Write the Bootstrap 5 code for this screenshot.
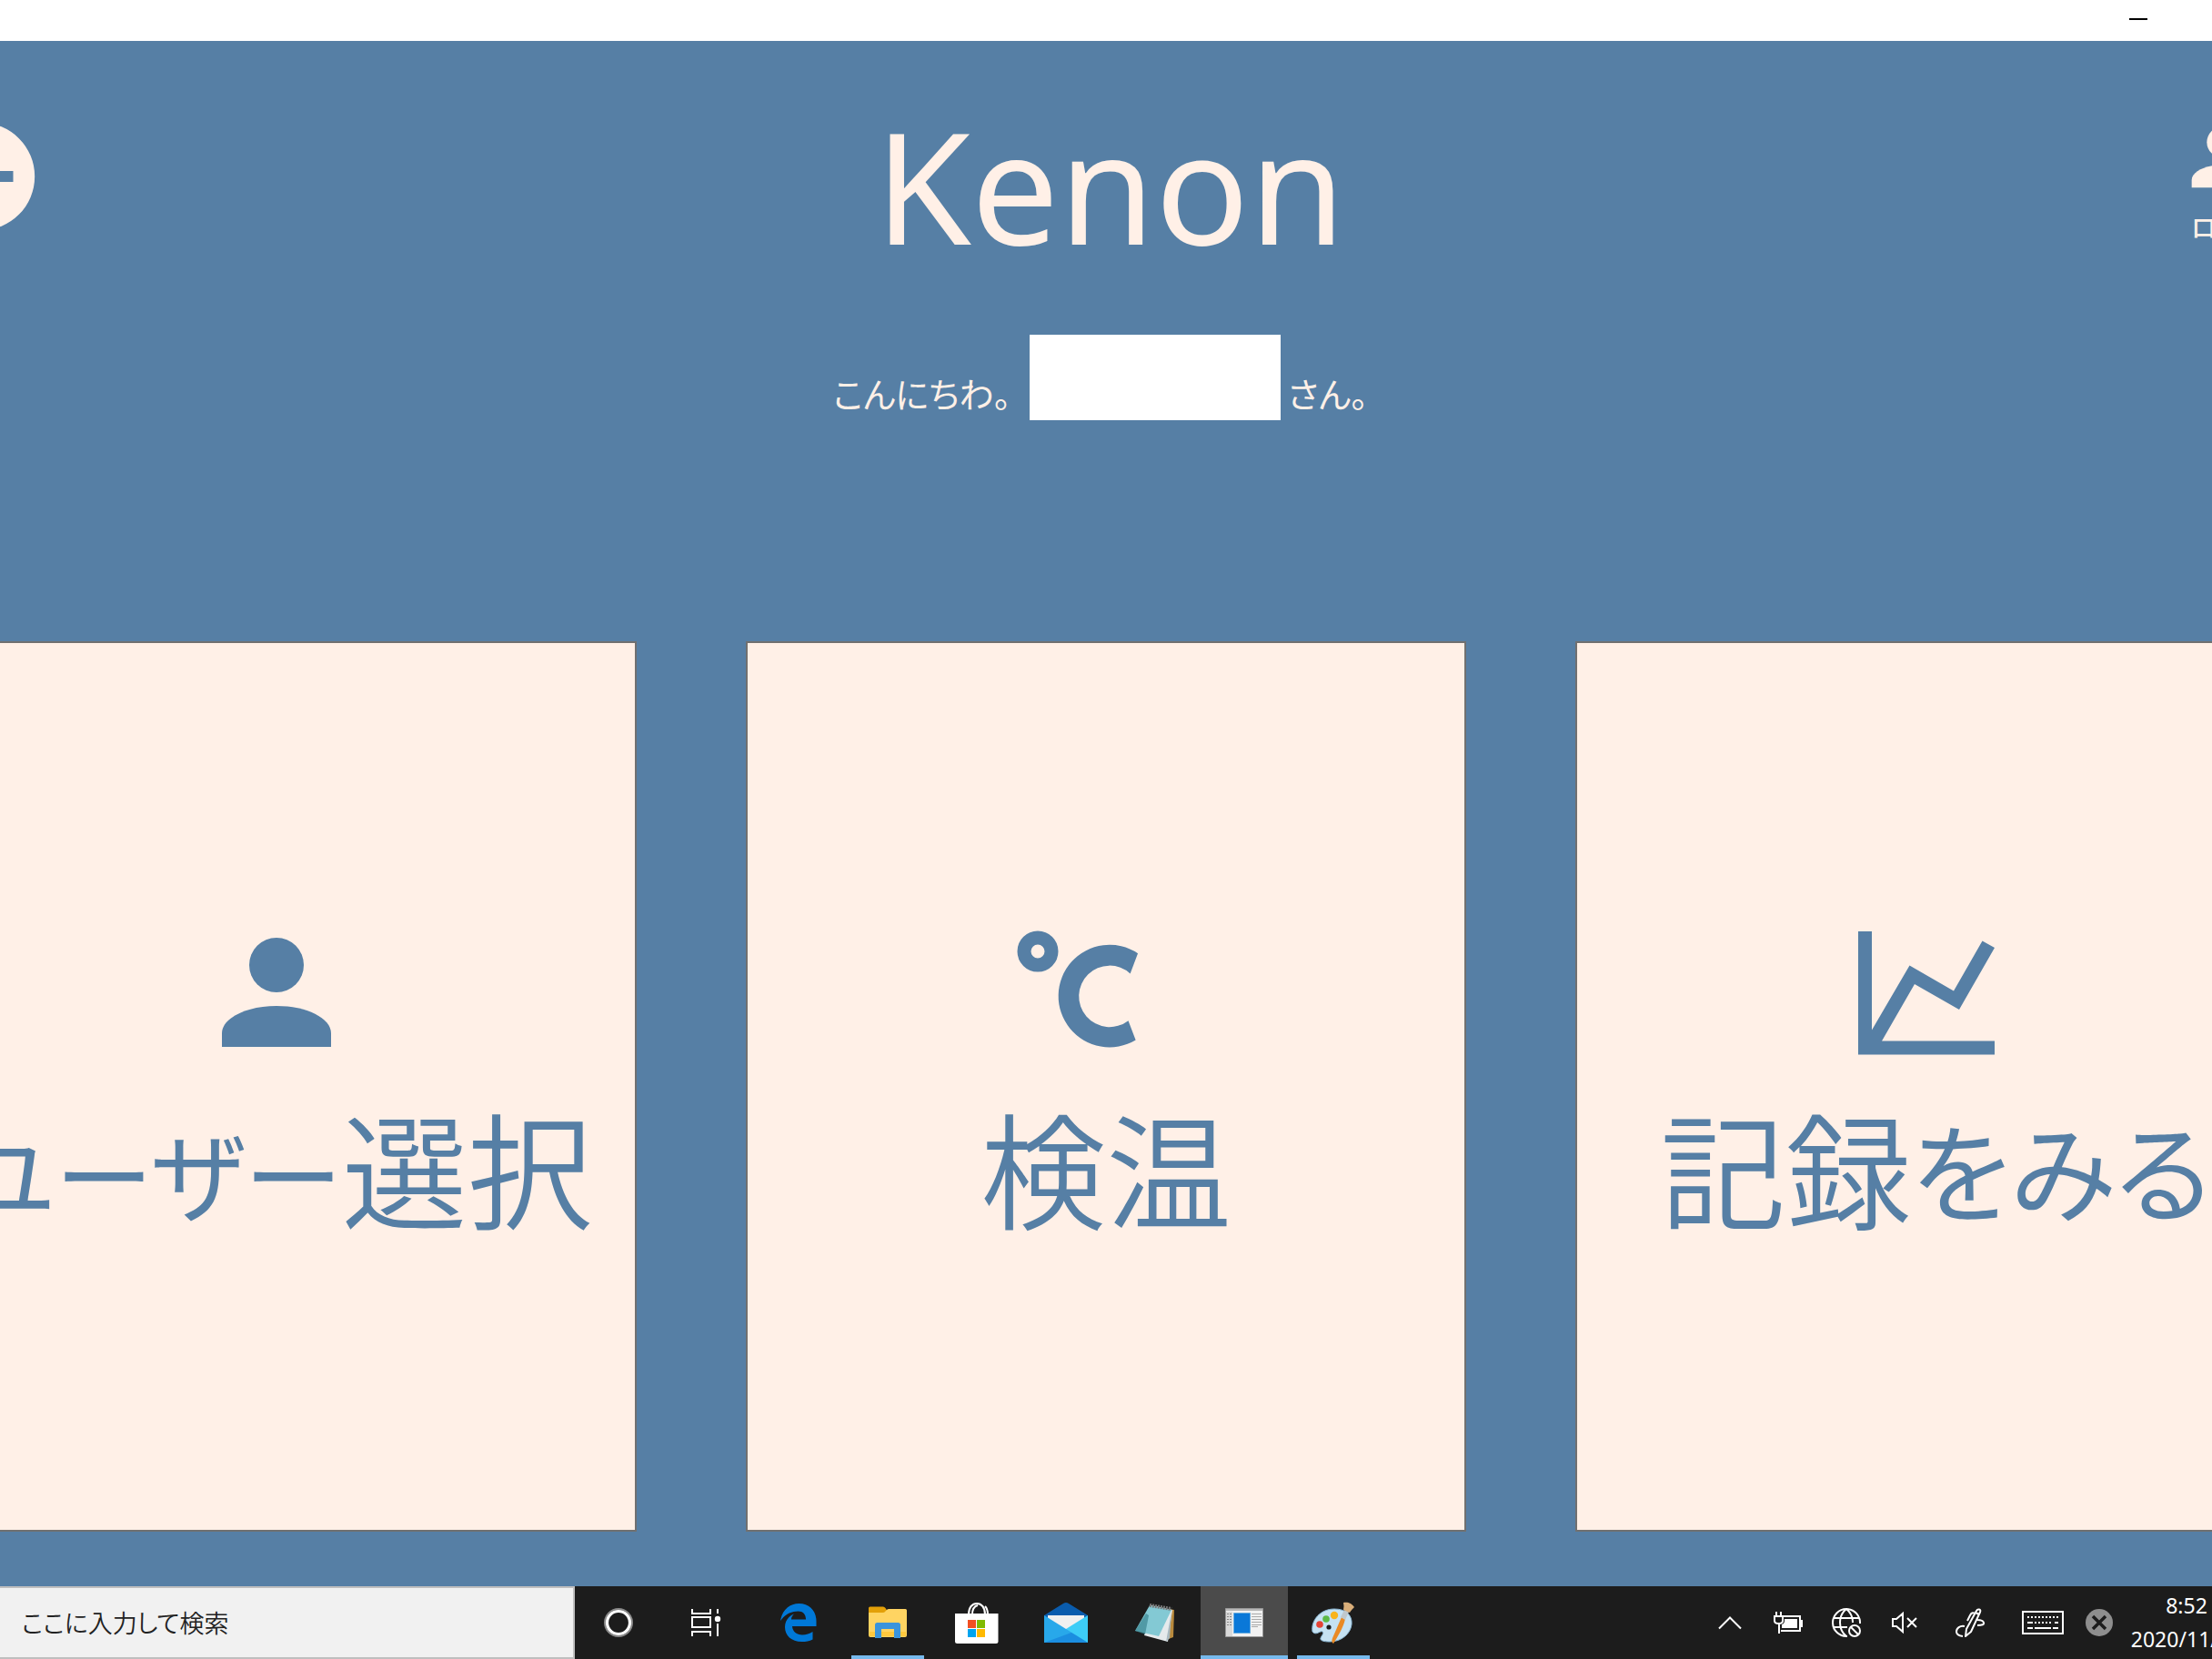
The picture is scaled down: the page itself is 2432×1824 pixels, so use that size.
<!DOCTYPE html>
<html lang="ja">
<head>
<meta charset="utf-8">
<meta name="viewport" content="width=device-width, initial-scale=1">
<title>Kenon</title>
<link rel="stylesheet" href="https://cdn.jsdelivr.net/npm/bootstrap@5.3.0/dist/css/bootstrap.min.css">
<script src="https://cdn.jsdelivr.net/npm/bootstrap@5.3.0/dist/js/bootstrap.bundle.min.js"></script>
<style>
  :root { --kenon-blue: #567fa5; --kenon-cream: #fff0e7; }
  body { font-family: "Noto Sans", "Noto Sans CJK JP", sans-serif; background: var(--kenon-blue); overflow: hidden; }
  button { border: 0; background: none; padding: 0; color: inherit; }
  svg { display: block; overflow: visible; flex: none; }
  .title-strip { height: 45px; background: #fff; padding-right: 71px; }
  .stage { width: 107.6%; margin-left: -3.8%; color: var(--kenon-cream); }
  .top-row { padding-top: 58px; }
  .side { width: 140px; padding-top: 20px; }
  .side-end { width: 131px; padding-top: 20px; }
  .side-label { font: 500 28px/36px "Noto Sans CJK JP", sans-serif; font-feature-settings: "palt"; padding-left: 16px; margin-top: 8px; white-space: nowrap; }
  .app-name { font-size: 171px; line-height: 200px; font-weight: 400; }
  .greeting { margin-top: 65px; margin-bottom: 243px; padding-right: 12px; font: 400 38px/60px "Noto Sans CJK JP", sans-serif; font-feature-settings: "palt"; }
  .user-name { width: 276px; height: 94px; background: #fff; margin: 0 8px 0 20px; }
  .tiles { gap: 120px; margin-bottom: 60px; }
  .tile { flex: 1 1 0; min-width: 0; background: var(--kenon-cream); border: 2px solid #707070; color: var(--kenon-blue); }
  .tile-text { font: 350 138px/200px "Noto Sans CJK JP", sans-serif; font-feature-settings: "palt"; white-space: nowrap; padding-bottom: 8px; }
  .kana { font-size: 118px; font-weight: 400; line-height: 1; vertical-align: 6px; }
  .kana-long { font-size: 108px; }
  .taskbar { height: 80px; background: #1c1c1c; color: #fff; }
  .search { width: 632px; border: 2px solid #bfbfbf; border-left: 0; background: #f1f1f1; padding: 0 24px; font: 350 27px/40px "Noto Sans CJK JP", sans-serif; font-feature-settings: "palt"; }
  .search::placeholder { color: #222; opacity: 1; }
  .task { width: 96px; display: flex; align-items: center; justify-content: center; }
  .pinned { gap: 2px; margin-left: 6px; }
  .running { background: linear-gradient(#76b9ed, #76b9ed) bottom / 80px 4px no-repeat; }
  .active-task { background: linear-gradient(#76b9ed, #76b9ed) bottom / 100% 4px no-repeat #4b4b4b; }
  .tray { width: 64px; display: flex; align-items: center; justify-content: center; }
  .tray-wide { width: 80px; }
  .tray-slim { width: 44px; }
  .clock { width: 102px; overflow: hidden; }
  .clock-text { width: 148px; font-size: 23px; line-height: 37px; text-align: center; white-space: nowrap; }
</style>
</head>
<body>
<div class="min-vh-100 d-flex flex-column">
  <header class="title-strip d-flex justify-content-end">
    <button aria-label="最小化"><svg width="20" height="45" viewBox="0 0 20 45"><path d="M0 20h20v2H0z" fill="#000"/></svg></button>
  </header>

  <main class="stage flex-grow-1 d-flex flex-column">
    <div class="top-row d-flex justify-content-between align-items-start">
      <button class="side" aria-label="戻る">
        <svg width="142" height="142" viewBox="0 0 24 24" fill="currentColor"><path fill-rule="evenodd" d="M12 2a10 10 0 1 0 0 20a10 10 0 0 0 0-20zM18 13H10l3.5 3.5L12 18l-6-6l6-6l1.500 1.500L10 11h8z"/></svg>
      </button>
      <h1 class="app-name m-0">Kenon</h1>
      <button class="side-end d-flex flex-column align-items-start">
        <svg width="100" height="100" viewBox="0 0 24 24" fill="currentColor"><circle cx="12" cy="8" r="4"/><path d="M4 20v-2c0-2.210 3.580-4 8-4s8 1.790 8 4v2z"/></svg>
        <span class="side-label">ログアウト</span>
      </button>
    </div>
    <div class="greeting d-flex justify-content-center align-items-end">
      <span>こんにちわ。</span><span class="user-name"></span><span>さん。</span>
    </div>
    <div class="tiles d-flex flex-grow-1">
      <button class="tile d-flex flex-column align-items-center justify-content-center">
        <svg width="180" height="180" viewBox="0 0 24 24" fill="currentColor"><circle cx="12" cy="8" r="4"/><path d="M4 20v-2c0-2.210 3.580-4 8-4s8 1.790 8 4v2z"/></svg>
        <span class="tile-text"><span class="kana kana-long">ユーザー</span>選択</span>
      </button>
      <button class="tile d-flex flex-column align-items-center justify-content-center">
        <svg width="180" height="180" viewBox="0 0 24 24"><circle cx="2" cy="6" r="2" fill="none" stroke="currentColor" stroke-width="2"/><path fill="currentColor" d="M16.670 6.300A7.500 7.500 0 1 0 16.350 19L15.270 16.150A4.500 4.500 0 1 1 15.550 9.250Z"/></svg>
        <span class="tile-text">検温</span>
      </button>
      <button class="tile d-flex flex-column align-items-center justify-content-center">
        <svg width="180" height="180" viewBox="0 0 180 180" fill="currentColor"><path d="M5 23H20V131.500L61.500 60.500L110 88.500L141.500 33.500L155 41L116 109L67 81L31 143.500H155V158.500H5z"/></svg>
        <span class="tile-text">記録<span class="kana">をみる</span></span>
      </button>
    </div>
  </main>

  <footer class="taskbar d-flex">
    <input class="search" type="search" aria-label="検索" placeholder="ここに入力して検索">
    <button class="task" aria-label="Cortana"><svg width="32" height="32" viewBox="0 0 32 32" fill="none"><circle cx="16" cy="16" r="15" stroke="#8a8a8a" stroke-width="2"/><circle cx="16" cy="16" r="12.500" stroke="#fff" stroke-width="3.200"/></svg></button>
    <button class="task" aria-label="タスク ビュー"><svg width="32" height="32" viewBox="0 0 32 32" fill="none" stroke="#fff" stroke-width="2"><path d="M1 1v5h20V1M1 10h20v11H1zM1 31v-5h20v5M29 1v5M29 17v14"/><circle cx="29" cy="12" r="3.200" fill="#fff" stroke="none"/></svg></button>
    <nav class="pinned d-flex" aria-label="タスク バー">
      <button class="task" aria-label="Edge"><svg width="40" height="42" viewBox="0 0 40 42"><path fill="#0078d7" d="M0 19C2 7 10 0 20.500 0C32 0 39.500 8 39.500 19.500V25H13C13.500 31 18 34.500 24 34.500C28.500 34.500 32 33 35.500 31V39.500C32 41.500 28 42 23.500 42C12 42 5 35 5 26C5 19 9 14 15 11.500C13 13.500 12 15.500 12 17.500H28C28 12 25 8.500 19.500 8.500C12 8.500 5 12 0 19z"/></svg></button>
      <button class="task running" aria-label="エクスプローラー"><svg width="42" height="36" viewBox="0 0 42 36"><path fill="#e3a008" d="M0 2q0-1.500 1.500-1.500H16q1.500 0 2.500 1.500l2 3-3 4H0z"/><path fill="#ffd462" d="M0 7h16q1.500 0 3-2t3-2h18.500q1.500 0 1.500 1.500V32q0 2-2 2H2q-2 0-2-2z"/><path fill="#ffc83d" d="M1 28h40v5H1z"/><path fill="#3b94dc" d="M7 35V20.500Q7 18 9.500 18h23q2.500 0 2.500 2.500V35h-7V25H14v10z"/></svg></button>
      <button class="task" aria-label="Microsoft Store"><svg width="48" height="45" viewBox="0 0 48 45"><g fill="none" stroke="#fff" stroke-width="2"><path d="M15 13C15 5 19 1 24 1s9 4 9 12M19 13c0-6 2-9 6-10M33 4c2 2 3 5 3 9"/></g><path fill="#fff" d="M0 12h47.500v30.500q0 2.500-2.500 2.500H2.500Q0 45 0 42.500z"/><path fill="#f25022" d="M14 19h9v9h-9z"/><path fill="#7fba00" d="M24 19h9v9h-9z"/><path fill="#00a4ef" d="M14 29h9v9h-9z"/><path fill="#ffb900" d="M24 29h9v9h-9z"/></svg></button>
      <button class="task" aria-label="メール"><svg width="48" height="44" viewBox="0 0 48 44"><path fill="#0a5cad" d="M0 14L21 1q3-2 6 0l21 13v4H0z"/><path fill="#f0f0f0" d="M4 14h40v5L24 32L4 20z"/><path fill="#3dcdf7" d="M48 14L24 29l-4 15h28z"/><path fill="#28a8ea" d="M0 14l48 30H0z"/><path fill="#1683dc" opacity=".7" d="M0 44l30-11 18 11z"/></svg></button>
      <button class="task" aria-label="メモ帳"><svg width="44" height="44" viewBox="0 0 44 44"><path fill="#b98a3d" d="M37 7l6 1-1 30-8 3z"/><path fill="#e5eaec" d="M18 3l23 5-5 35-26-7z"/><path fill="#a9b9c0" d="M40 10l-2 29-4 4z"/><path fill="#83c9d4" d="M16 3l24 5-14 29-26-6z"/><path fill="#34818d" opacity=".65" d="M12 12l3 2-4 21-11-4z"/><path d="M16 3l24 4" stroke="#777" stroke-width="4" stroke-dasharray="2 1"/></svg></button>
      <button class="task active-task" aria-label="Kenon"><svg width="42" height="32" viewBox="0 0 42 32"><path fill="#f2f2f2" stroke="#999" d="M.5.500h41v31H.5z"/><path fill="#b8b8b8" d="M1 1h40v2H1z"/><path fill="#d9d9d9" d="M1 4h7v27H1z"/><path fill="#0a78d8" stroke="#68acdf" d="M9.500 5.500h18v22h-18z"/><path stroke="#aaa" d="M29 6.500h11M29 9.500h11M29 12.500h11M29 15.500h11M29 18.500h11M29 20.500h7"/><path stroke="#888" stroke-dasharray="2 1" d="M2 6.500h5M2 9.500h5M2 12.500h5M2 15.500h5M2 18.500h5"/></svg></button>
      <button class="task running" aria-label="ペイント"><svg width="48" height="46" viewBox="0 0 48 46"><path fill="#c5e2f3" stroke="#8cb9d6" d="M1 33C-1 20 10 8 25 8c13 0 20 7 19 17S33 44 20 44c-6 0-11-1-10-4s4-5 2-7-7 5-11 0z"/><circle cx="9" cy="25" r="3.800" fill="#e34234"/><circle cx="16" cy="19" r="3.800" fill="#5cba47"/><circle cx="25" cy="15" r="4.200" fill="#f8b41c"/><circle cx="19" cy="28" r="2.600" fill="#1c1c1c"/><path fill="#e98a25" d="M33 17l4 2c-2 9-8 19-13 27-2-1-2-3-1-6z"/><path fill="#bfc8cc" d="M36 9l5 2-4 9-5-3z"/><path fill="#d9ae7a" d="M35 1c4-1 9 0 12 5-2 2-4 4-5 6l-7-3q1-4 0-8z"/></svg></button>
    </nav>

    <div class="d-flex ms-auto">
      <button class="tray" aria-label="隠れているインジケーター"><svg width="26" height="14" viewBox="0 0 26 14" fill="none" stroke="#fff" stroke-width="2"><path d="M1 13.500L13 1.500l12 12"/></svg></button>
      <button class="tray" aria-label="バッテリー"><svg width="32" height="24" viewBox="0 0 32 24" fill="none" stroke="#fff" stroke-width="2"><path d="M11 5h18v16H8M30 9v8M3 0v5M8 0v5M1 5h9v5q0 3-4.500 3T1 10zM6 13v11"/><path fill="#fff" stroke="none" d="M12 8h14v10H9v-4q3-1 3-4zM30 9h2v8h-2z"/></svg></button>
      <button class="tray" aria-label="ネットワーク"><svg width="32" height="32" viewBox="0 0 32 32" fill="none" stroke="#fff" stroke-width="2"><path d="M31 17A15 15 0 1 0 17 31M16 1C11 5 9 10 9 16s2 11 7 15M16 1c5 4 7 9 7 15M2 11h28M2 21h15"/><circle cx="25" cy="25" r="6"/><path d="M21 21l8 8"/></svg></button>
      <button class="tray" aria-label="ミュート"><svg width="28" height="24" viewBox="0 0 28 24" fill="none" stroke="#fff" stroke-width="2"><path d="M1 8h4l7-6v20l-7-6H1zM17 7l10 10M27 7L17 17"/></svg></button>
      <button class="tray tray-wide" aria-label="Windows Ink"><svg width="32" height="32" viewBox="0 0 32 32" fill="none" stroke="#fff" stroke-width="2" stroke-linejoin="round"><path d="M11 31l1-8L23 3q1-2 3-1.500t1 3L17 26zM22 5l4 2M21 6q-3-2-5 2l-3 6M10 20c-5-1-9 2-9 6q0 4 7 5M24 13q6 0 7 3t-7 3"/></svg></button>
      <button class="tray tray-wide" aria-label="タッチ キーボード"><svg width="46" height="26" viewBox="0 0 46 26" fill="none" stroke="#fff" stroke-width="2"><path d="M1 1h44v24H1zM14 19h18M6 19h6M34 19h6"/><path stroke-dasharray="2 2" d="M6 7h34M14 13h20"/><path d="M6 13h6M36 13h4"/></svg></button>
      <button class="tray tray-slim" aria-label="IME"><svg width="30" height="30" viewBox="0 0 30 30"><circle cx="15" cy="15" r="15" fill="#8e8e8e"/><path d="M8 8l14 14M22 8L8 22" stroke="#1c1c1c" stroke-width="3.500"/></svg></button>
      <button class="clock"><span class="clock-text d-block">8:52<br>2020/11/10</span></button>
    </div>
  </footer>
</div>
</body>
</html>
